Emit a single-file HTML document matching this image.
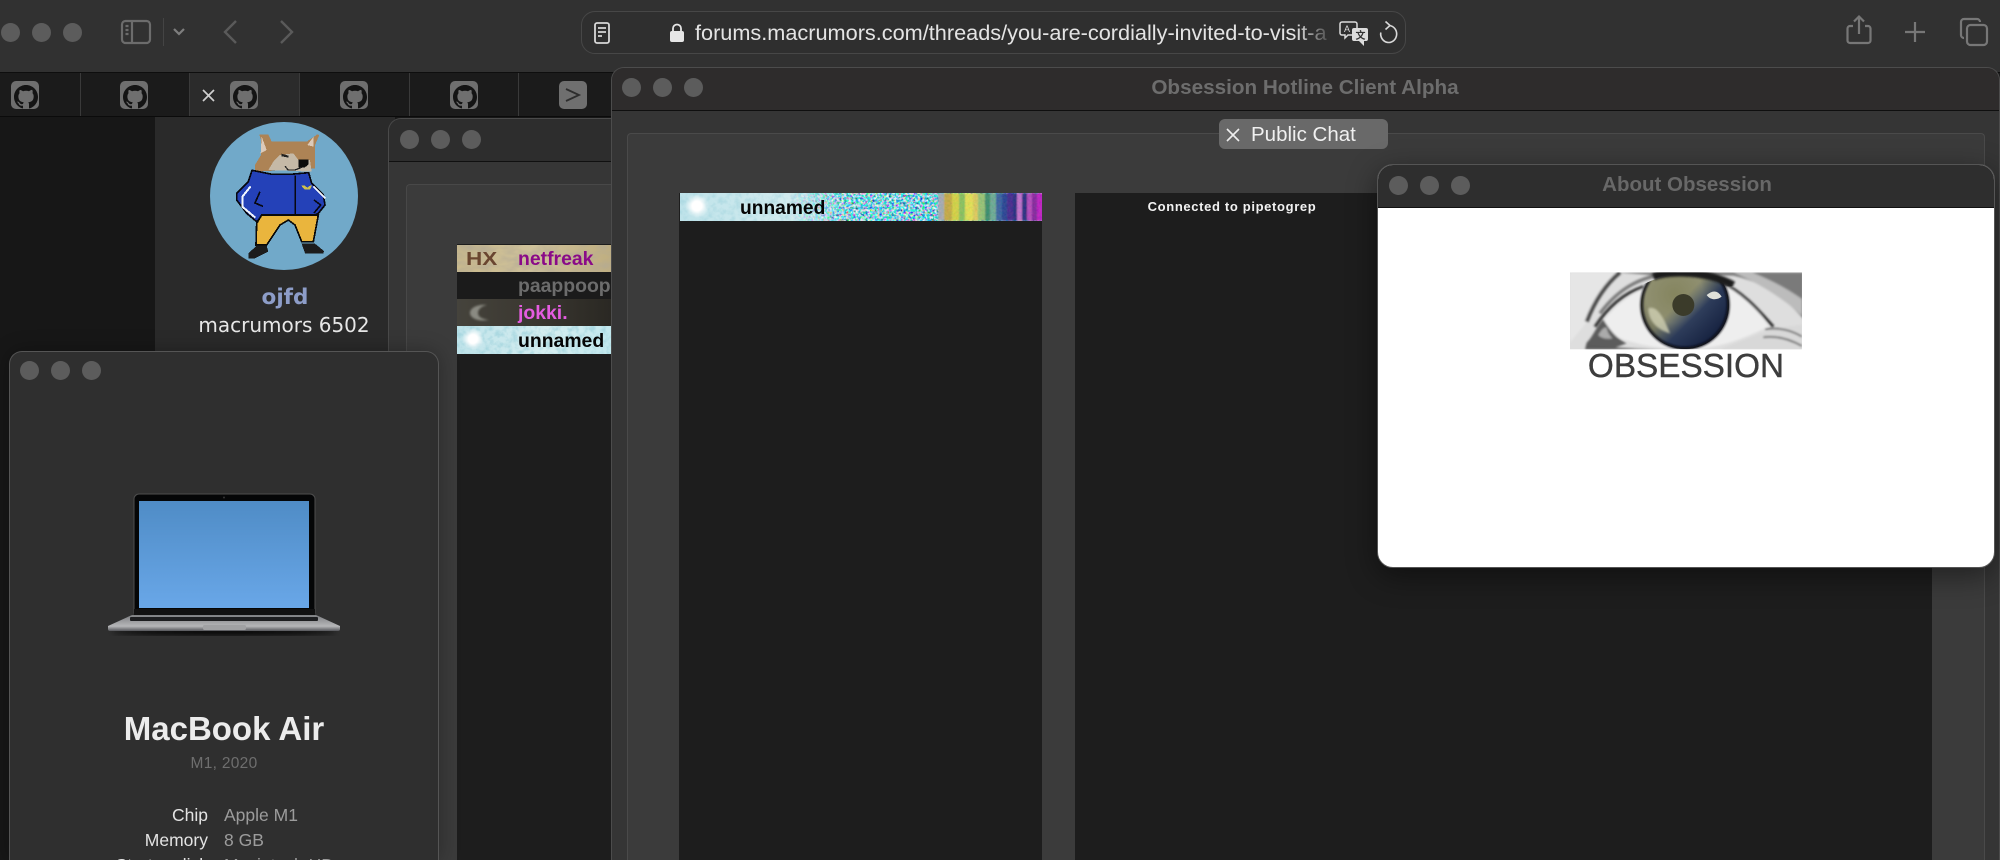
<!DOCTYPE html>
<html style="height:860px;overflow:hidden"><head><meta charset="utf-8"><title>Obsession</title>
<style>
html,body{margin:0;padding:0;background:#171717}
body{width:2000px;height:860px;overflow:hidden;font-family:"Liberation Sans",sans-serif}
#w{position:relative;width:2000px;height:860px;overflow:hidden;contain:paint}
.a{position:absolute;box-sizing:border-box}
.d{position:absolute;width:19px;height:19px;border-radius:50%;background:#5c5c5c}
.t{position:absolute;white-space:nowrap}
svg{position:absolute;overflow:visible}
.gh{position:absolute;top:81px;width:28px;height:28px;background:#6f6f6f;border-radius:5px;overflow:hidden}
.div{position:absolute;top:73px;height:43px;width:1px;background:#3a3a3a}
.row{position:absolute;left:457px;width:154px;height:27px;overflow:hidden}
.row span{position:absolute;left:61px;top:3px;font:bold 19.4px "Liberation Sans",sans-serif;white-space:nowrap}
</style></head><body><div id="w">
<svg width="0" height="0" style="position:absolute"><symbol id="gh" viewBox="0 0 16 16"><path d="M8 0C3.58 0 0 3.58 0 8c0 3.54 2.29 6.53 5.47 7.59.4.07.55-.17.55-.38 0-.19-.01-.82-.01-1.49-2.01.37-2.53-.49-2.69-.94-.09-.23-.48-.94-.82-1.13-.28-.15-.68-.52-.01-.53.63-.01 1.08.58 1.23.82.72 1.21 1.87.87 2.33.66.07-.52.28-.87.51-1.07-1.78-.2-3.64-.89-3.64-3.95 0-.87.31-1.59.82-2.15-.08-.2-.36-1.02.08-2.12 0 0 .67-.21 2.2.82.64-.18 1.32-.27 2-.27.68 0 1.36.09 2 .27 1.53-1.04 2.2-.82 2.2-.82.44 1.1.16 1.92.08 2.12.51.56.82 1.27.82 2.15 0 3.07-1.87 3.75-3.65 3.95.29.25.54.73.54 1.48 0 1.07-.01 1.93-.01 2.2 0 .21.15.46.55.38A8.013 8.013 0 0016 8c0-4.42-3.58-8-8-8z" fill="#141414"/></symbol>
<filter id="n1" x="0" y="0" width="100%" height="100%"><feTurbulence type="fractalNoise" baseFrequency=".42" numOctaves="2" seed="4"/><feColorMatrix values="3.4 0 0 0 -1.5 0 2.4 0 0 -.6 0 0 2.2 0 -.4 0 0 0 0 1"/></filter>
<filter id="n2" x="0" y="0" width="100%" height="100%"><feTurbulence type="fractalNoise" baseFrequency=".06 .12" numOctaves="3" seed="8"/><feColorMatrix values="0 0 0 0 .45 0 0 0 0 .4 0 0 0 0 .3 1.6 0 0 0 -.55"/></filter>
<filter id="n3" x="0" y="0" width="100%" height="100%"><feTurbulence type="fractalNoise" baseFrequency=".18" numOctaves="3" seed="2"/><feColorMatrix values="0 0 0 0 .35 0 0 0 0 .65 0 0 0 0 .72 2.6 0 0 0 -1.05"/></filter>
<filter id="b06"><feGaussianBlur stdDeviation=".7"/></filter>
<filter id="b1"><feGaussianBlur stdDeviation="1"/></filter>
<filter id="b3"><feGaussianBlur stdDeviation="3"/></filter>
<linearGradient id="g1" x1="0" x2="1" y1="0" y2="0"><stop offset="0" stop-color="#bfe3ea"/><stop offset=".4" stop-color="#d8eef0"/><stop offset="1" stop-color="#9fdbe2"/></linearGradient>
<radialGradient id="iris" cx=".38" cy=".38" r=".72"><stop offset="0" stop-color="#85855f"/><stop offset=".45" stop-color="#8f8f70"/><stop offset=".8" stop-color="#60624e"/><stop offset="1" stop-color="#22241e"/></radialGradient>
<linearGradient id="blue" x1="0" y1="0" x2="1" y2="1"><stop offset=".45" stop-color="#33476e" stop-opacity="0"/><stop offset=".62" stop-color="#1f3058" stop-opacity=".85"/><stop offset="1" stop-color="#0b1430"/></linearGradient>
<linearGradient id="scr" x1="0" y1="0" x2="0" y2="1"><stop offset="0" stop-color="#4f8cc6"/><stop offset="1" stop-color="#69a7e8"/></linearGradient>
<linearGradient id="base" x1="0" y1="0" x2="0" y2="1"><stop offset="0" stop-color="#7d7f82"/><stop offset=".7" stop-color="#b5b6b8"/><stop offset="1" stop-color="#55565a"/></linearGradient>
<radialGradient id="sun"><stop offset=".4" stop-color="#fff"/><stop offset="1" stop-color="#fff" stop-opacity="0"/></radialGradient>
</svg>

<!-- toolbar -->
<div class="a" style="left:0;top:0;width:2000px;height:73px;background:#313131"></div>
<div class="d" style="left:1px;top:23px"></div><div class="d" style="left:32px;top:23px"></div><div class="d" style="left:63px;top:23px"></div>
<svg style="left:120px;top:18px" width="32" height="28" viewBox="0 0 32 28" fill="none" stroke="#6c6c6c" stroke-width="2.2"><rect x="2" y="3" width="28" height="22" rx="3.5"/><path d="M12 3v22M5.5 8h3M5.5 12h3M5.500 16h3"/></svg>
<div class="a" style="left:163px;top:18px;width:1px;height:28px;background:#444"></div>
<svg style="left:172px;top:27px" width="14" height="10" fill="none" stroke="#7e7e7e" stroke-width="2.2"><path d="M2 2l5 5 5-5"/></svg>
<svg style="left:222px;top:19px" width="18" height="26" fill="none" stroke="#5a5a5a" stroke-width="2.4"><path d="M14 2L3 13l11 11"/></svg>
<svg style="left:277px;top:19px" width="18" height="26" fill="none" stroke="#5a5a5a" stroke-width="2.4"><path d="M4 2l11 11L4 24"/></svg>

<div class="a" style="left:581px;top:11px;width:825px;height:43px;border:1px solid #474747;border-radius:14px;background:#2f2f2f"></div>
<svg style="left:593px;top:21px" width="18" height="24" fill="none" stroke="#d8d8d8" stroke-width="1.8"><rect x="2" y="2" width="14" height="20" rx="2"/><path d="M5 7h8M5 11h8M5 15h4"/></svg>
<svg style="left:670px;top:23px" width="14" height="20"><rect x="0" y="8" width="14" height="11" rx="2" fill="#e6e6e6"/><path d="M3 9V5.500a4 4 0 018 0V9" fill="none" stroke="#e6e6e6" stroke-width="1.8"/></svg>
<div class="t" id="url" style="left:695px;top:20px;width:632px;overflow:hidden;font-size:21.7px;line-height:26px;color:#e4e4e4;-webkit-mask-image:linear-gradient(90deg,#000 95%,rgba(0,0,0,.2) 100%);mask-image:linear-gradient(90deg,#000 95%,rgba(0,0,0,.2) 100%)">forums.macrumors.com/threads/you-are-cordially-invited-to-visit-a</div>
<svg style="left:1339px;top:21px" width="31" height="26" viewBox="0 0 31 26"><path d="M3 1h13a2 2 0 012 2v9a2 2 0 01-2 2H9l-3 3v-3H3a2 2 0 01-2-2V3a2 2 0 012-2z" fill="#2f2f2f" stroke="#dcdcdc" stroke-width="1.5"/><path d="M15 7h12a2 2 0 012 2v9a2 2 0 01-2 2h-2v5l-5-5h-5a2 2 0 01-2-2V9a2 2 0 012-2z" fill="#dcdcdc"/><text x="5" y="11" font-size="9" font-family="Liberation Sans" fill="#dcdcdc">A</text><text x="16.500" y="18" font-size="10" font-family="Noto Sans CJK SC,sans-serif" font-weight="bold" fill="#333">文</text></svg>
<svg style="left:1378px;top:20px" width="20" height="26" fill="none" stroke="#d8d8d8" stroke-width="1.6"><path d="M11 5.500a8 8.500 0 11-8.200 7"/><path d="M7.500 1.500L12 5.500l-4.500 4"/></svg>

<svg style="left:1845px;top:14px" width="28" height="32" fill="none" stroke="#777" stroke-width="2.2"><path d="M8 12H5a2.500 2.500 0 00-2.500 2.500v12A2.500 2.500 0 005 29h18a2.500 2.500 0 002.500-2.500v-12A2.500 2.500 0 0023 12h-3"/><path d="M14 20V3M9 7.500l5-5 5 5"/></svg>
<svg style="left:1904px;top:21px" width="22" height="22" fill="none" stroke="#777" stroke-width="2.2"><path d="M11 1v20M1 11h20"/></svg>
<svg style="left:1959px;top:17px" width="30" height="30" fill="none" stroke="#777" stroke-width="2.2"><path d="M5 21a3 3 0 01-3-3V5a3 3 0 013-3h13a3 3 0 013 3"/><rect x="8" y="8" width="20" height="20" rx="3.500"/></svg>

<!-- tabs -->
<div class="a" style="left:0;top:72px;width:2000px;height:45px;background:#1b1b1b;border-top:1px solid #0e0e0e;border-bottom:1px solid #0b0b0b"></div>
<div class="a" style="left:189px;top:73px;width:110px;height:43px;background:#2b2b2b"></div>
<div class="div" style="left:80px"></div><div class="div" style="left:189px"></div><div class="div" style="left:299px"></div><div class="div" style="left:409px"></div><div class="div" style="left:518px"></div>
<svg style="left:202px;top:89px" width="13" height="13" stroke="#cfcfcf" stroke-width="1.700"><path d="M1 1l11 11M12 1L1 12"/></svg>
<div class="gh" style="left:11px"><svg style="left:3px;top:4px" width="24" height="24"><use href="#gh"/></svg></div>
<div class="gh" style="left:120px"><svg style="left:3px;top:4px" width="24" height="24"><use href="#gh"/></svg></div>
<div class="gh" style="left:230px"><svg style="left:3px;top:4px" width="24" height="24"><use href="#gh"/></svg></div>
<div class="gh" style="left:340px"><svg style="left:3px;top:4px" width="24" height="24"><use href="#gh"/></svg></div>
<div class="gh" style="left:450px"><svg style="left:3px;top:4px" width="24" height="24"><use href="#gh"/></svg></div>
<div class="gh" style="left:559px"><svg style="left:6px;top:6px" width="16" height="16" fill="none" stroke="#2d2d2d" stroke-width="1.800"><path d="M1 2l13 6L1 14"/></svg></div>

<!-- page bg -->
<div class="a" style="left:0;top:117px;width:155px;height:743px;background:#171717"></div>
<div class="a" style="left:155px;top:117px;width:240px;height:743px;background:#2a2a2a"></div>

<!-- avatar -->
<div class="a" style="left:210px;top:122px;width:148px;height:148px;border-radius:50%;background:#71a9c9"></div>
<svg style="left:230px;top:125px" width="110" height="145" viewBox="0 0 330 435" shape-rendering="crispEdges">
<path d="M88 28h27l10 22h105l32-22 6 2-13 30v70l-180 10v-20l18-30V45z" fill="#ad8355"/>
<path d="M95 35l15 40-18 10zM250 36l-18 24 18 5z" fill="#dccab9"/>
<path d="M115 135l15-25 20-20 40-5 15 20h35l5 35z" fill="#c5b9a7"/>
<path d="M155 86l20 6v6l-20-4z" fill="#222"/>
<path d="M205 104h30v15l-10 8h-20z" fill="#0c0c0c"/>
<path d="M165 124l10 11h20l20-8" fill="none" stroke="#222" stroke-width="4"/>
<path d="M66 136l60 12h55l55-5 9 32 35 35 5 30-20 25-10 5H100l-20 20-30-25-30-40v-20l35-35z" fill="#2441b8" stroke="#07070f" stroke-width="5"/>
<path d="M62 184l-24 30v32l38 32" fill="none" stroke="#f2f6ff" stroke-width="6"/>
<path d="M250 184l36 36" fill="none" stroke="#f2f6ff" stroke-width="6"/>
<path d="M196 152v118M90 200l-15 34 24 10M252 225l20 15-20 24" fill="none" stroke="#07070f" stroke-width="5"/>
<path d="M214 182h10l8 6 8-6h6l-6 12h-16z" fill="#cfc04c"/>
<path d="M95 270h170l-15 80h-35l-20-50-20-15-25 15-40 60H78l2-65z" fill="#eab53d" stroke="#0a0a0a" stroke-width="5"/>
<path d="M80 362h30l5 18-40 20H55v-15zM215 356h40l27 22-2 7h-55z" fill="#1c1c1c"/>
</svg>
<div class="t" style="left:185px;width:200px;text-align:center;top:285px;font:bold 21.500px 'DejaVu Sans',sans-serif;color:#8d9dc8">ojfd</div>
<div class="t" style="left:184px;width:200px;text-align:center;top:313px;font:20px 'DejaVu Sans',sans-serif;color:#e6e6e6">macrumors 6502</div>

<!-- mid window -->
<div class="a" style="left:388px;top:118px;width:260px;height:742px;background:#363636;border:1px solid #4a4a4a;border-bottom:0;border-radius:13px 0 0 0;overflow:hidden">
<div class="a" style="left:0;top:0;width:100%;height:43px;background:#2d2d2d;border-bottom:1px solid #101010"></div>
<div class="a" style="left:17px;top:65px;width:300px;height:677px;background:#3b3b3b;border:1px solid #484848;border-bottom:0;border-radius:4px 4px 0 0"></div>
</div>
<div class="d" style="left:400px;top:130px"></div><div class="d" style="left:431px;top:130px"></div><div class="d" style="left:462px;top:130px"></div>
<div class="a" style="left:457px;top:244px;width:154px;height:616px;background:#1d1d1d"></div>

<div class="row" style="top:245px;background:linear-gradient(90deg,#c9b98c,#cfc29b 50%,#bfae80)">
<svg style="left:0;top:0" width="154" height="27"><rect width="154" height="27" filter="url(#n2)"/></svg>
<div class="t" style="left:9px;top:4px;font-size:18px;font-weight:bold;color:#6a4630;transform:scaleX(1.25);transform-origin:0 0">HX</div>
<span style="color:#8a0a88">netfreak</span></div>
<div class="row" style="top:272px;background:#1b1b1b"><span style="color:#6c6c6c">paappoop</span></div>
<div class="row" style="top:299px;background:linear-gradient(90deg,#45433c,#3a3730 50%,#2a2823)">
<svg style="left:10px;top:5px" width="24" height="18"><path d="M20 1C10 0 3 4 3 9s8 9 19 7c-7-1-11-3-11-7s4-7 9-8z" fill="#8a8a82" filter="url(#b1)"/></svg>
<span style="color:#e45ce0">jokki.</span></div>
<div class="row" style="top:326px;height:28px;background:linear-gradient(90deg,#bfe3ea,#d6eef0 60%,#c2e8ee)">
<svg style="left:0;top:0" width="154" height="28"><rect width="154" height="28" filter="url(#n3)" opacity=".7"/><circle cx="16" cy="13" r="11" fill="url(#sun)"/></svg>
<span style="top:4px;color:#050505">unnamed</span></div>

<!-- obsession window -->
<div class="a" style="left:611px;top:67px;width:1389px;height:793px;background:#353535;border:1px solid #4c4c4c;border-bottom:0;border-radius:13px 13px 0 0;overflow:hidden">
<div class="a" style="left:0;top:0;width:100%;height:43px;background:#2e2c2c;border-bottom:1px solid #0f0f0f"></div>
<div class="a" style="left:15px;top:65px;width:1358px;height:727px;background:#3b3b3b;border:1px solid #4a4a4a;border-bottom:0;border-radius:4px 4px 0 0"></div>
</div>
<div class="d" style="left:622px;top:78px"></div><div class="d" style="left:653px;top:78px"></div><div class="d" style="left:684px;top:78px"></div>
<div class="t" style="left:1105px;width:400px;text-align:center;top:76px;font-weight:bold;font-size:20.700px;line-height:24px;color:#6d6d6d">Obsession Hotline Client Alpha</div>

<div class="a" style="left:1219px;top:119px;width:169px;height:30px;background:#696969;border-radius:6px"></div>
<svg style="left:1226px;top:128px" width="14" height="14" stroke="#eee" stroke-width="1.600"><path d="M1 1l12 12M13 1L1 13"/></svg>
<div class="t" style="left:1251px;top:123px;font-size:20.500px;line-height:24px;color:#f0f0f0">Public Chat</div>

<div class="a" style="left:679px;top:193px;width:363px;height:667px;background:#1d1d1d"></div>
<svg style="left:680px;top:193px" width="362" height="28" viewBox="0 0 362 28">
<defs>
<linearGradient id="fade" x1="0" x2="1"><stop offset=".3" stop-color="#fff" stop-opacity="0"/><stop offset=".46" stop-color="#fff" stop-opacity=".9"/><stop offset="1" stop-color="#fff"/></linearGradient>
<mask id="m1"><rect width="362" height="28" fill="url(#fade)"/></mask>
<clipPath id="cb"><rect width="362" height="28"/></clipPath></defs>
<rect width="362" height="28" fill="url(#g1)"/>
<rect width="362" height="28" filter="url(#n3)" opacity=".5"/>
<circle cx="17" cy="13" r="12" fill="url(#sun)"/>
<rect width="362" height="28" filter="url(#n1)" mask="url(#m1)" opacity=".85"/>
<g clip-path="url(#cb)"><g opacity=".92" filter="url(#b06)">
<rect x="258" width="6" height="28" fill="#a8a8b0"/><rect x="264" width="8" height="28" fill="#c8a840"/><rect x="272" width="7" height="28" fill="#d9d040"/><rect x="279" width="6" height="28" fill="#8cbf5a"/><rect x="285" width="8" height="28" fill="#e6de50"/><rect x="293" width="5" height="28" fill="#e0c858"/><rect x="298" width="7" height="28" fill="#9ac070"/><rect x="305" width="5" height="28" fill="#3f8a68"/><rect x="310" width="6" height="28" fill="#6fa890"/><rect x="316" width="6" height="28" fill="#3d5f9c"/><rect x="322" width="5" height="28" fill="#2c3f90"/><rect x="327" width="6" height="28" fill="#46288a"/><rect x="333" width="4" height="28" fill="#2c2a7c"/><rect x="337" width="5" height="28" fill="#c46cc8"/><rect x="342" width="5" height="28" fill="#2c2a7c"/><rect x="347" width="5" height="28" fill="#b845b8"/><rect x="352" width="5" height="28" fill="#8a209a"/><rect x="357" width="7" height="28" fill="#c21fc0"/>
</g></g>
</svg>
<div class="t" style="left:740px;top:197px;font-weight:bold;font-size:19.200px;line-height:24px;color:#050505">unnamed</div>
<div class="a" style="left:1075px;top:193px;width:857px;height:667px;background:#1d1d1d"></div>
<div class="t" style="left:1132px;width:200px;text-align:center;top:199px;font-weight:bold;font-size:13px;line-height:16px;letter-spacing:.65px;color:#f2f2f2">Connected to pipetogrep</div>

<!-- about window -->
<div class="a" style="left:1377px;top:164px;width:618px;height:404px;background:#fff;border:1px solid #555;border-radius:16px;overflow:hidden;box-shadow:0 8px 30px rgba(0,0,0,.45)">
<div class="a" style="left:0;top:0;width:100%;height:43px;background:#2e2e2e;border-bottom:1px solid #111"></div>
</div>
<div class="d" style="left:1389px;top:176px"></div><div class="d" style="left:1420px;top:176px"></div><div class="d" style="left:1451px;top:176px"></div>
<div class="t" style="left:1487px;width:400px;text-align:center;top:173px;font-weight:bold;font-size:20.500px;line-height:24px;color:#686868">About Obsession</div>

<svg style="left:1520px;top:250px" width="290" height="150" viewBox="0 0 870 450">
<defs><clipPath id="eyec"><rect x="150" y="67" width="696" height="231"/></clipPath>
<clipPath id="iric"><path d="M220 235C300 130 380 80 500 67c130 0 210 60 270 165-90 40-180 66-270 66-110 0-210-25-280-63z"/></clipPath></defs>
<g clip-path="url(#eyec)">
<rect x="150" y="67" width="696" height="231" fill="#dedede"/>
<g filter="url(#b3)">
<path d="M150 67h140c-40 40-70 90-90 150l-50 60z" fill="#e6e6e6"/>
<path d="M290 67h560v140c-50-60-120-110-210-130H420z" fill="#7a7a7a"/>
<path d="M640 67c70 30 140 70 206 130v-50c-50-35-100-60-150-80z" fill="#bcbcbc"/>
<path d="M200 215C225 150 260 100 300 67" stroke="#4a4a4a" stroke-width="12" fill="none"/>
<path d="M240 190C300 110 370 75 470 67" stroke="#7a7a7a" stroke-width="10" fill="none"/>
<path d="M235 235C295 145 380 95 500 80c120 0 190 60 245 150-80 40-160 68-245 68-100 0-200-25-265-63z" fill="#eeeeee"/>
<path d="M600 95c70 30 120 90 160 135" stroke="#222" stroke-width="8" fill="none"/>
<path d="M225 230C265 170 310 130 370 110" stroke="#333" stroke-width="9" fill="none"/>
<path d="M200 278c20-20 30-50 50-70 15 25 35 55 70 72l-50 18h-75z" fill="#5c5c5c"/>
<path d="M235 255c10-18 18-25 25-22 3 15 10 25 18 32-18 3-35 0-43-10z" fill="#ababab"/>
<path d="M720 250c50-15 90-22 126-26v74H600z" fill="#d8d8d8"/>
<path d="M735 238c40-6 75 0 111 22M730 262c40-6 80 6 116 26" stroke="#555" stroke-width="5" fill="none"/>
<path d="M200 282c90 15 200 16 310 16H200z" fill="#5a5a5a"/>
</g>
<g clip-path="url(#iric)">
<circle cx="495" cy="165" r="132" fill="url(#iris)"/>
<circle cx="495" cy="165" r="132" fill="url(#blue)"/>
<circle cx="490" cy="165" r="33" fill="#3a3a2c" filter="url(#b1)"/>
<path d="M560 135c15-12 30-18 45 5-15 12-35 10-45-5z" fill="#e0e1da" filter="url(#b1)"/>
<path d="M385 175c25-10 45 25 65 75-35-10-65-35-65-75z" fill="#cfcfb2" opacity=".8" filter="url(#b3)"/>
<circle cx="495" cy="165" r="130" fill="none" stroke="#0d0f14" stroke-width="8" filter="url(#b3)"/>
</g>
<path d="M400 80C450 62 560 62 640 105" fill="none" stroke="#1a1a1a" stroke-width="22" filter="url(#b3)"/>
</g>
</svg>
<div class="t" style="left:1489px;width:394px;text-align:center;top:349px;font-size:33.300px;line-height:36px;color:#3d3d3d;-webkit-text-stroke:.4px #3d3d3d">OBSESSION</div>

<!-- about this mac -->
<div class="a" style="left:9px;top:351px;width:430px;height:509px;background:#2f2f2f;border:1px solid #555;border-bottom:0;border-radius:13px 13px 0 0;box-shadow:0 0 20px rgba(0,0,0,.3)"></div>
<div class="d" style="left:20px;top:361px"></div><div class="d" style="left:51px;top:361px"></div><div class="d" style="left:82px;top:361px"></div>

<svg style="left:100px;top:485px" width="250" height="160" viewBox="100 485 250 160">
<ellipse cx="224" cy="632" rx="112" ry="3" fill="#000" filter="url(#b3)"/>
<path d="M134 613V499a5 5 0 015-5h171a5 5 0 015 5v114z" fill="#050607" stroke="#4e4e4e" stroke-width="1"/>
<rect x="139" y="501" width="170" height="107" fill="url(#scr)"/>
<circle cx="224" cy="497.500" r="1" fill="#333"/>
<rect x="134" y="609" width="181" height="6" fill="#111"/>
<path d="M132 615h184l24 11v3a2 2 0 01-2 2H110a2 2 0 01-2-2v-3z" fill="url(#base)"/>
<rect x="130" y="617" width="188" height="4" rx="1" fill="#1d1e20"/>
<rect x="203" y="625" width="43" height="5" rx="1.500" fill="#a0a1a3"/>
</svg>

<div class="t" style="left:24px;width:400px;text-align:center;top:709px;font-weight:bold;font-size:33px;line-height:40px;color:#ececec">MacBook Air</div>
<div class="t" style="left:24px;width:400px;text-align:center;top:755px;font-size:15.500px;line-height:18px;color:#6e6e6e;letter-spacing:.3px">M1, 2020</div>
<div class="t" style="left:58px;width:150px;text-align:right;top:804px;font-size:17.500px;line-height:22px;color:#e3e3e3">Chip</div>
<div class="t" style="left:224px;top:804px;font-size:17.500px;line-height:22px;color:#9c9c9c">Apple M1</div>
<div class="t" style="left:58px;width:150px;text-align:right;top:829px;font-size:17.500px;line-height:22px;color:#e3e3e3">Memory</div>
<div class="t" style="left:224px;top:829px;font-size:17.500px;line-height:22px;color:#9c9c9c">8 GB</div>
<div class="t" style="left:58px;width:150px;height:6px;overflow:hidden;text-align:right;top:854px;font-size:17.500px;line-height:22px;color:#e3e3e3">Startup disk</div>
<div class="t" style="left:224px;height:6px;overflow:hidden;top:854px;font-size:17.500px;line-height:22px;color:#9c9c9c">Macintosh HD</div>
</div></body></html>
